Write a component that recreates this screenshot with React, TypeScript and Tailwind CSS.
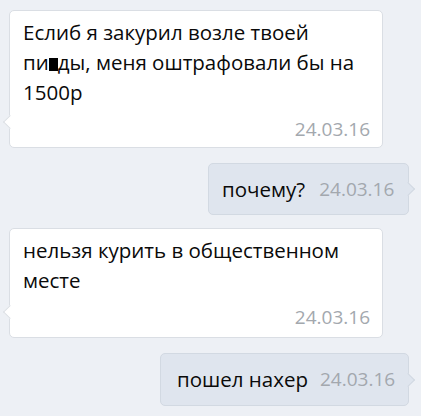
import React from "react";

const font = { fontFamily: '"Open Sans", "Noto Sans", sans-serif' };

function LeftTail() {
  return (
    <span className="absolute left-[-5px] bottom-[20px] w-[10px] h-[10px] rotate-45 bg-white border-l border-b border-[#dadee4]" />
  );
}
function RightTail() {
  return (
    <span className="absolute right-[-5px] bottom-[20px] w-[10px] h-[10px] rotate-45 bg-[#dfe5ee] border-t border-r border-[#d2d9e2]" />
  );
}

export default function App() {
  return (
    <div className="w-[421px] h-[416px] bg-[#edf0f5] overflow-hidden" style={font}>
      <div className="flex flex-col pt-[10px]">
        <div className="relative ml-[9px] w-[374px] h-[138px] bg-white border border-[#dadee4] rounded-[5px] pl-[13px] pr-[12px] pt-[6px]">
          <LeftTail />
          <div className="relative text-[20.5px] leading-[30px] text-[#0a0a0a]">
            Еслиб я закурил возле твоей
            <br />
            пи<span className="inline-block w-[9px] h-[13px] bg-black align-[-1px]" />ды, меня оштрафовали бы на
            <br />
            1500р
          </div>
          <div className="relative text-right text-[19px] leading-[20px] text-[#a3a8ae] mt-[12px]">24.03.16</div>
        </div>

        <div className="relative ml-[208px] mt-[15px] w-[201px] h-[52px] bg-[#dfe5ee] border border-[#d2d9e2] rounded-[5px] flex items-center pl-[13px]">
          <RightTail />
          <span className="relative text-[20.5px] text-[#0a0a0a]">почему?</span>
          <span className="relative ml-[14px] text-[19px] text-[#a3a8ae]">24.03.16</span>
        </div>

        <div className="relative ml-[9px] mt-[13px] w-[374px] h-[110px] bg-white border border-[#dadee4] rounded-[5px] pl-[13px] pr-[12px] pt-[6px]">
          <LeftTail />
          <div className="relative text-[20.5px] leading-[30px] text-[#0a0a0a]">
            нельзя курить в общественном
            <br />
            месте
          </div>
          <div className="relative text-right text-[19px] leading-[20px] text-[#a3a8ae] mt-[12px]">24.03.16</div>
        </div>

        <div className="relative ml-[160px] mt-[15px] w-[249px] h-[53px] bg-[#dfe5ee] border border-[#d2d9e2] rounded-[5px] flex items-center pl-[16px]">
          <RightTail />
          <span className="relative text-[20.5px] text-[#0a0a0a]">пошел нахер</span>
          <span className="relative ml-[12px] text-[19px] text-[#a3a8ae]">24.03.16</span>
        </div>
      </div>
    </div>
  );
}
